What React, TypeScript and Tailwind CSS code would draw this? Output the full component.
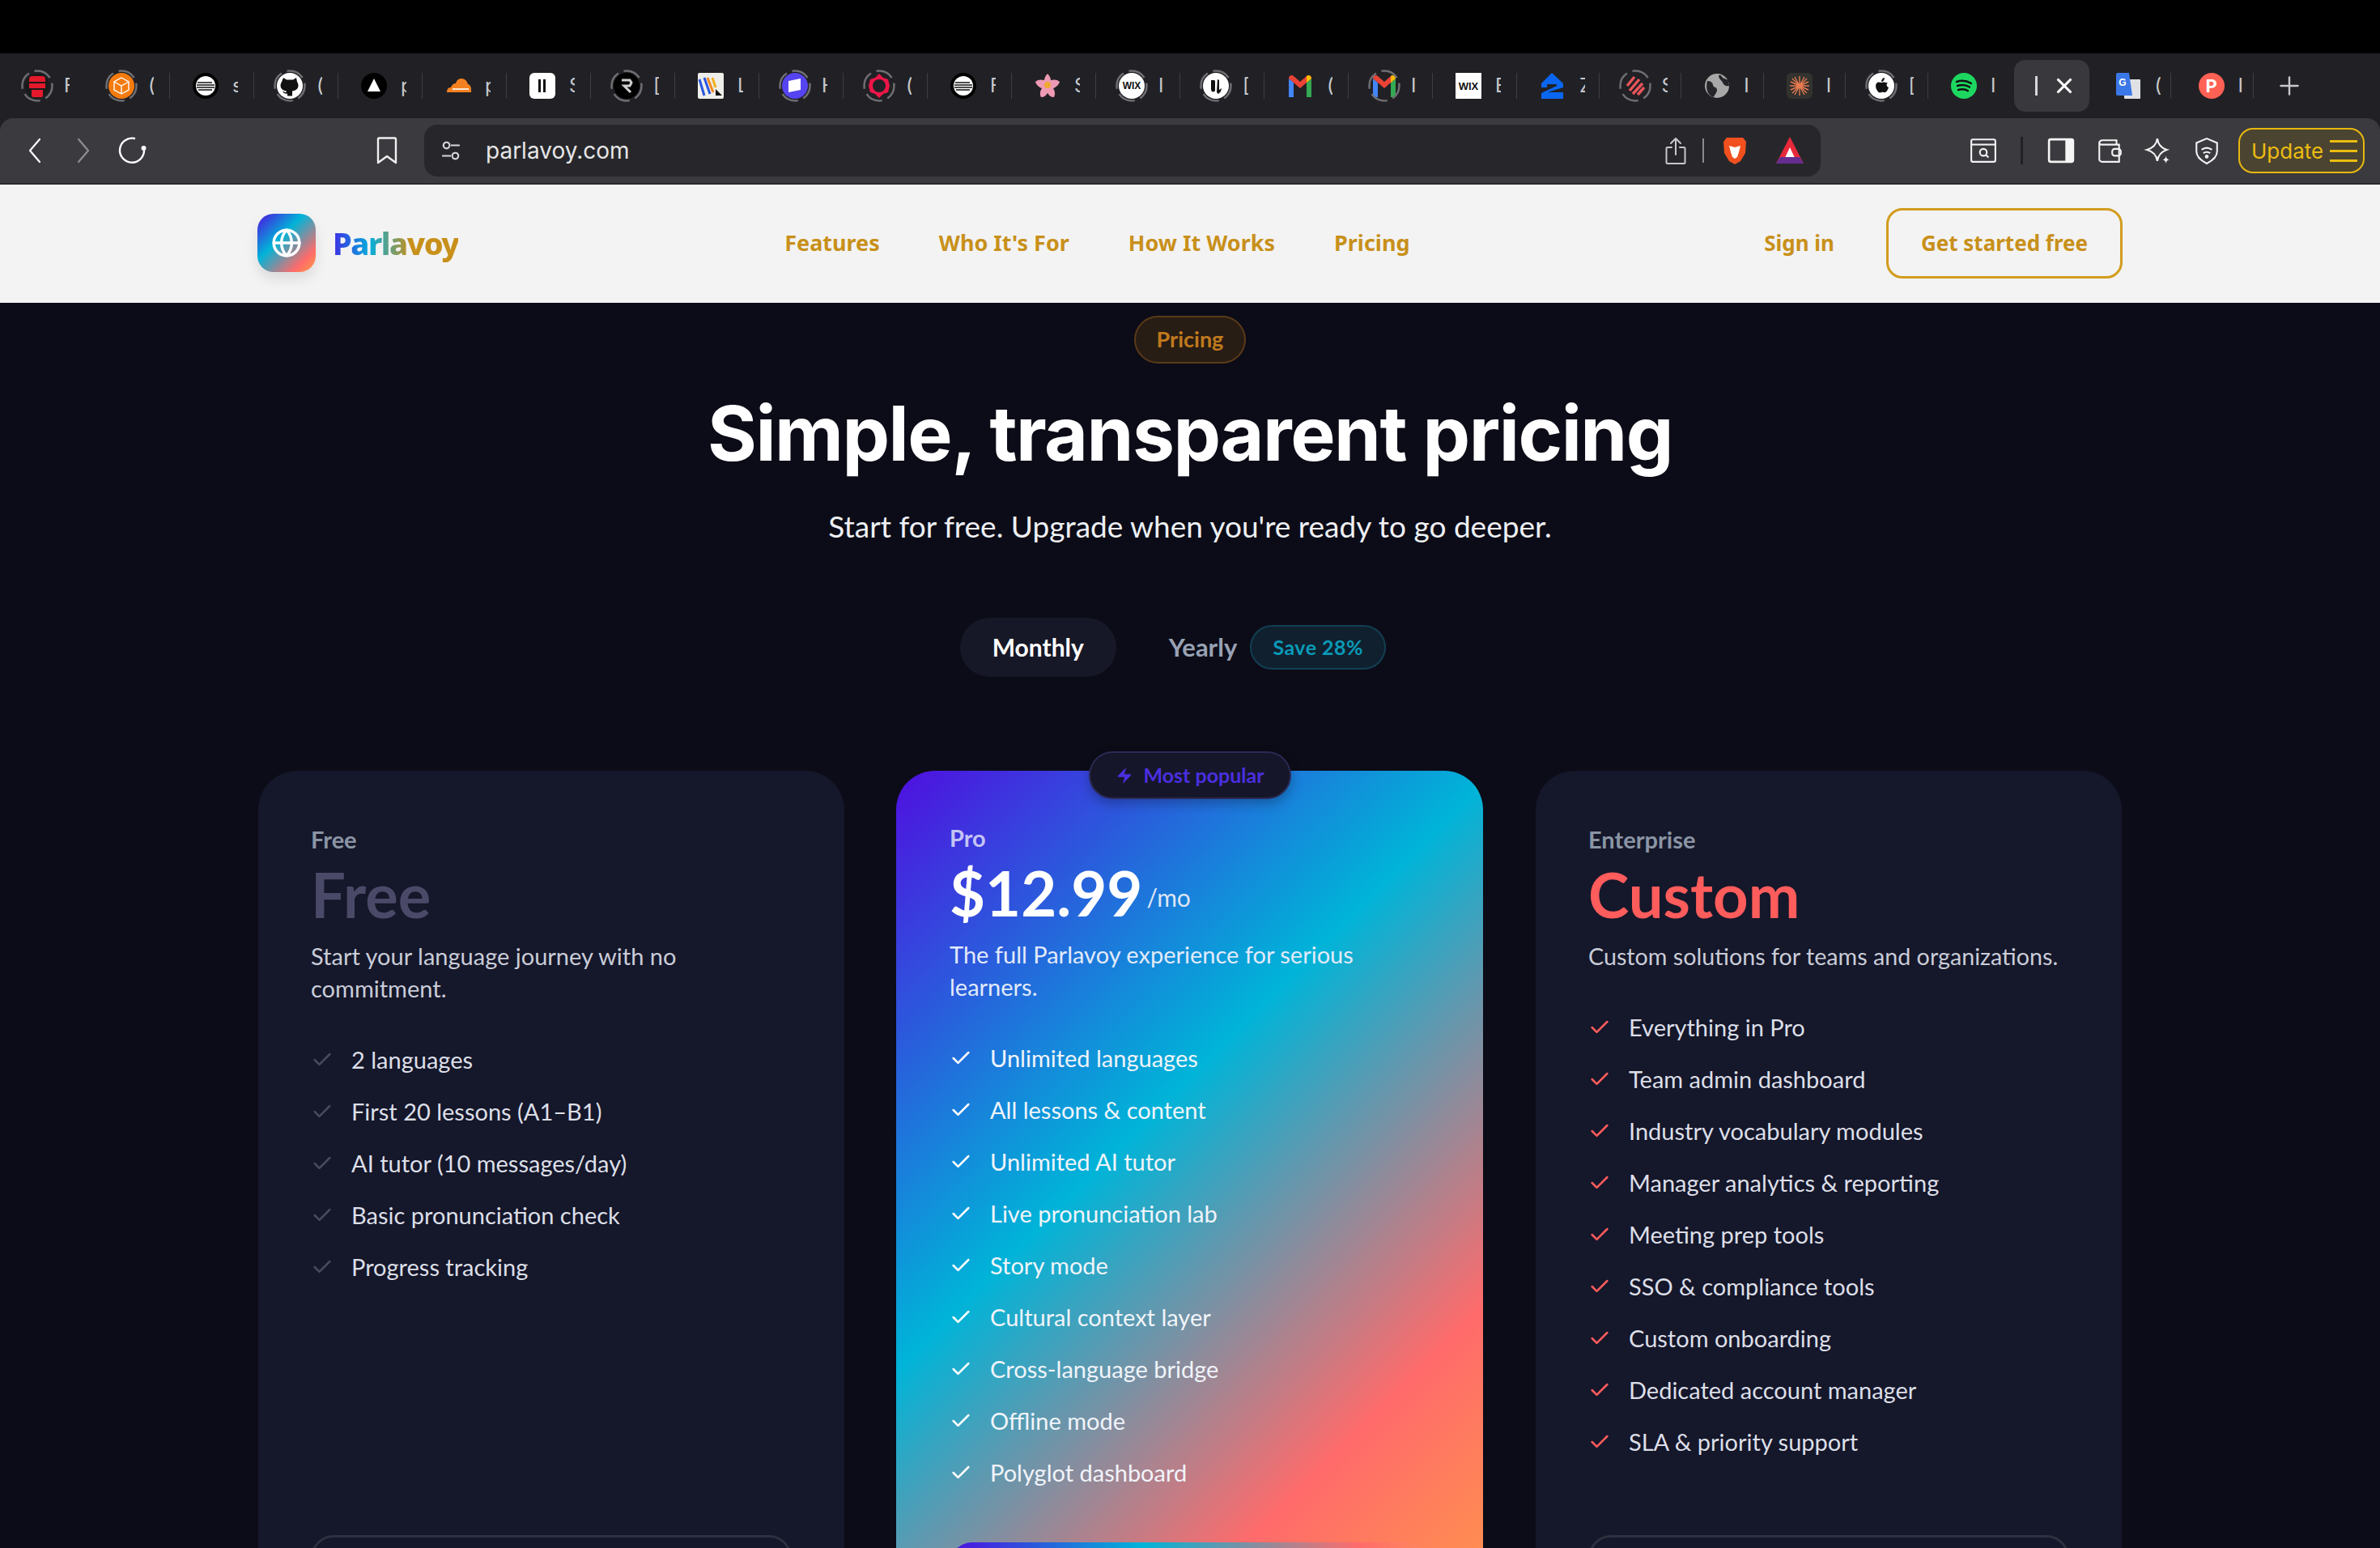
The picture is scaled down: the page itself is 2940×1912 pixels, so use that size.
import { Check, Plus, X, Zap, Globe } from 'lucide-react'

const freeItems = ['2 languages', 'First 20 lessons (A1–B1)', 'AI tutor (10 messages/day)', 'Basic pronunciation check', 'Progress tracking']
const proItems = ['Unlimited languages', 'All lessons & content', 'Unlimited AI tutor', 'Live pronunciation lab', 'Story mode', 'Cultural context layer', 'Cross-language bridge', 'Offline mode', 'Polyglot dashboard']
const entItems = ['Everything in Pro', 'Team admin dashboard', 'Industry vocabulary modules', 'Manager analytics & reporting', 'Meeting prep tools', 'SSO & compliance tools', 'Custom onboarding', 'Dedicated account manager', 'SLA & priority support']

const tabs = [
  { k: 'fort', t: 'F', ring: true },
  { k: 'cube', t: '(', ring: true },
  { k: 'lines', t: 's', ring: false },
  { k: 'gh', t: '(', ring: true },
  { k: 'tri', t: 'p', ring: false },
  { k: 'cf', t: 'p', ring: false },
  { k: 'pause', t: 'S', ring: false },
  { k: 'r', t: '[', ring: true },
  { k: 'sq', t: 'L', ring: false },
  { k: 'purple', t: 'H', ring: true },
  { k: 'redring', t: '(', ring: true },
  { k: 'lines', t: 'F', ring: false },
  { k: 'flower', t: 'S', ring: false },
  { k: 'wix', t: 'I', ring: true },
  { k: 'unreal', t: '[', ring: true },
  { k: 'gmail', t: '(', ring: false },
  { k: 'gmail', t: 'I', ring: true },
  { k: 'wixsq', t: 'E', ring: false },
  { k: 'z', t: 'Z', ring: false },
  { k: 'stripes', t: 'S', ring: true },
  { k: 'globe', t: 'I', ring: false },
  { k: 'burst', t: 'I', ring: false },
  { k: 'apple', t: '[', ring: true },
  { k: 'spotify', t: 'I', ring: false },
]

function Favicon({ k }: { k: string }) {
  const box = 'w-[32px] h-[32px] block'
  switch (k) {
    case 'fort':
      return (
        <svg viewBox="0 0 32 32" className={box}>
          <circle cx="16" cy="16" r="15" fill="#1a1a1a" />
          <path d="M6 8a4 4 0 0 1 4-4h12a4 4 0 0 1 4 4v3H6zM6 13h20v6H6zM9 21h14v7a2 2 0 0 1-2 2H11a2 2 0 0 1-2-2z" fill="#e5192c" />
        </svg>
      )
    case 'cube':
      return (
        <svg viewBox="0 0 32 32" className={box}>
          <circle cx="16" cy="16" r="16" fill="#f47b0f" />
          <path d="M16 6l9 5v10l-9 5-9-5V11zM7 11l9 5 9-5M16 16v10" fill="none" stroke="#fff" strokeWidth="1.4" />
        </svg>
      )
    case 'lines':
      return (
        <svg viewBox="0 0 32 32" className={box}>
          <circle cx="16" cy="16" r="16" fill="#000" />
          <circle cx="16" cy="16" r="12" fill="#fff" />
          <path d="M6 12h18M5 15h22M5 18h22M7 21h17" stroke="#111" strokeWidth="1.6" />
        </svg>
      )
    case 'gh':
      return (
        <svg viewBox="0 0 32 32" className={box}>
          <circle cx="16" cy="16" r="16" fill="#fff" />
          <path d="M8 6l4 2.500h8L24 6l1 5c1 1.500 1.500 3 1.500 4.500 0 4.500-3.500 6.500-7.500 7v6h-6v-3c-3 .7-5-.5-6-3 1.500.5 3 1.500 4 2l1-2c-4-.5-7.500-2.500-7.500-7 0-1.500.5-3 1.500-4.500z" fill="#111" />
        </svg>
      )
    case 'tri':
      return (
        <svg viewBox="0 0 32 32" className={box}>
          <circle cx="16" cy="16" r="16" fill="#000" />
          <path d="M16 7l8 16H8z" fill="#fff" />
        </svg>
      )
    case 'cf':
      return (
        <svg viewBox="0 0 32 32" className={box}>
          <path d="M2 24c0-4 2-6 5-6 1-3 3-5 6-5 1-4 4-6 7-6 4 0 7 3 8 7 2 0 4 3 4 6v4z" fill="#f48120" />
          <path d="M9 20h20" stroke="#fff" strokeWidth="1.6" />
        </svg>
      )
    case 'pause':
      return (
        <svg viewBox="0 0 32 32" className={box}>
          <rect width="32" height="32" rx="6" fill="#fff" />
          <rect x="11" y="8" width="3" height="16" fill="#111" />
          <rect x="17" y="8" width="3" height="16" fill="#111" />
        </svg>
      )
    case 'r':
      return (
        <svg viewBox="0 0 32 32" className={box}>
          <circle cx="16" cy="16" r="16" fill="#000" />
          <path d="M10 9h10l2 3-2 4h-7l8 8" fill="none" stroke="#cfcfcf" strokeWidth="3" />
        </svg>
      )
    case 'sq':
      return (
        <svg viewBox="0 0 32 32" className={box}>
          <rect width="32" height="32" rx="2" fill="#eeeeea" />
          <path d="M2 8l6 20M8 6l7 20" stroke="#2a55e0" strokeWidth="3" />
          <path d="M12 6l7 18" stroke="#f28a1e" strokeWidth="3" />
          <path d="M18 6l4 12" stroke="#f2b01e" strokeWidth="3" />
          <path d="M22 20l8 8h-8z" fill="#111" />
        </svg>
      )
    case 'purple':
      return (
        <svg viewBox="0 0 32 32" className={box}>
          <circle cx="16" cy="16" r="16" fill="#5544f0" />
          <path d="M8 10l15-3v14L8 24z" fill="#fff" />
        </svg>
      )
    case 'redring':
      return (
        <svg viewBox="0 0 32 32" className={box}>
          <path d="M16 1l5 5 6 2 2 8-2 8-6 2-5 5-5-5-6-2-2-8 2-8 6-2z" fill="#ee1548" />
          <circle cx="16" cy="16" r="8" fill="#212125" />
        </svg>
      )
    case 'flower':
      return (
        <svg viewBox="0 0 32 32" className={box}>
          <path d="M16 1c3 3 4 6 4 8 4-1 8-1 11 2-1 4-5 7-8 8 2 3 3 7 1 11-4 0-6-2-8-5-2 3-4 5-8 5-2-4-1-8 1-11-3-1-7-4-8-8 3-3 7-3 11-2 0-2 1-5 4-8z" fill="#ee9ab4" />
          <circle cx="16" cy="15" r="4" fill="#f0a830" />
        </svg>
      )
    case 'wix':
      return (
        <svg viewBox="0 0 32 32" className={box}>
          <circle cx="16" cy="16" r="16" fill="#fff" />
          <text x="16" y="20" textAnchor="middle" fontSize="12" fontWeight="700" fill="#111" fontFamily="'Liberation Sans', sans-serif">WIX</text>
        </svg>
      )
    case 'unreal':
      return (
        <svg viewBox="0 0 32 32" className={box}>
          <circle cx="16" cy="16" r="16" fill="#fff" />
          <path d="M10 9v11c0 3 2 4 4 3l1-1V10l-1-1zM18 8l2 1v12l3-2-1 4-3 3-2-2z" fill="#111" />
        </svg>
      )
    case 'gmail':
      return (
        <svg viewBox="0 0 32 32" className={box}>
          <path d="M2 30V7l6 5v18z" fill="#4285f4" />
          <path d="M24 30V12l6-5v23z" fill="#34a853" />
          <path d="M2 7c0-4 4-5 6-3l8 7 8-7c2-2 6-1 6 3l-6 5-8 7-8-7z" fill="#ea4335" />
          <path d="M24 4c2-2 6-1 6 3l-6 5z" fill="#fbbc04" />
        </svg>
      )
    case 'wixsq':
      return (
        <svg viewBox="0 0 32 32" className={box}>
          <rect width="32" height="32" fill="#fff" />
          <text x="16" y="21" textAnchor="middle" fontSize="13" fontWeight="700" fill="#111" fontFamily="'Liberation Sans', sans-serif">WIX</text>
        </svg>
      )
    case 'z':
      return (
        <svg viewBox="0 0 32 32" className={box}>
          <path d="M15 0l14 13v5L10 24h19v8H2v-7l19-9v-2H9v4H2v-5z" fill="#0a66f0" />
        </svg>
      )
    case 'stripes':
      return (
        <svg viewBox="0 0 32 32" className={box}>
          <path d="M6 16L15 5M9 22L21 8M13 26L25 13M19 27L27 18" stroke="#e8555a" strokeWidth="3.400" />
        </svg>
      )
    case 'globe':
      return (
        <svg viewBox="0 0 32 32" className={box}>
          <circle cx="16" cy="16" r="15" fill="#a8a8a8" />
          <path d="M4 10c4 0 7 2 7 5s5 2 5 6-4 7-4 9c-6-1-11-9-8-20zM21 3c1 3 4 4 9 6l1 7c-4 1-7-1-8-4s-5-4-5-9z" fill="#26262a" />
        </svg>
      )
    case 'burst':
      return (
        <svg viewBox="0 0 32 32" className={box}>
          <rect width="32" height="32" rx="6" fill="#32322f" />
          <path d="M16 4v24M4 16h24M7 7l18 18M25 7L7 25M10 5l12 22M22 5L10 27M5 11l22 10M27 11L5 21" stroke="#e67a50" strokeWidth="1.400" />
        </svg>
      )
    case 'apple':
      return (
        <svg viewBox="0 0 32 32" className={box}>
          <circle cx="16" cy="16" r="16" fill="#fff" />
          <path d="M21 12c-2-1-3 0-5 0s-3-1-5 0c-3 2-2 7 0 10 1 2 3 3 5 2 1-.5 2-.5 3 0 3 1 5-3 6-6-3-1-3-5-1-6zM16 11c0-3 2-5 4-5 0 3-2 5-4 5z" fill="#111" />
        </svg>
      )
    case 'spotify':
      return (
        <svg viewBox="0 0 32 32" className={box}>
          <circle cx="16" cy="16" r="16" fill="#1ed760" />
          <path d="M7 11c6-2 13-1 18 2M8 16c5-1.500 11-1 15 1.500M9 21c4-1 9-.8 12 1.200" fill="none" stroke="#111" strokeWidth="2.400" strokeLinecap="round" />
        </svg>
      )
    default:
      return null
  }
}

function Ring() {
  return (
    <svg viewBox="0 0 40 40" className="absolute -left-[4px] -top-[4px] w-[40px] h-[40px]">
      <circle cx="20" cy="20" r="18.500" fill="none" stroke="#6e6e73" strokeWidth="2.500" strokeDasharray="22 7" strokeDashoffset="4" />
    </svg>
  )
}

function Tab({ k, t, ring, wide, sep }: { k: string; t: string; ring: boolean; wide: boolean; sep: boolean }) {
  return (
    <div className={`${wide ? 'w-[104px]' : 'w-[101.6px]'} h-[32px] shrink-0 pl-[28px] flex items-center relative`}>
      <div className="relative w-[32px] h-[32px] shrink-0">
        {ring && <Ring />}
        <Favicon k={k} />
      </div>
      <span className="ml-[17px] w-[7px] overflow-hidden text-[24px] leading-[32px] text-[#c9c9cc]">{t}</span>
      {sep && <div className="absolute right-0 top-0 w-px h-[32px] bg-[#3e3e42]" />}
    </div>
  )
}

function TabStrip() {
  return (
    <div className="h-[80px] bg-[#212125] flex items-center pl-[2px] font-['Inter',sans-serif]">
      {tabs.map((tab, i) => (
        <Tab key={i} {...tab} wide={i < 18} sep={i > 0 && i < tabs.length - 1} />
      ))}
      <div className="ml-[4px] w-[93px] h-[64px] rounded-[14px] bg-[#38383d] flex items-center pl-[26px] gap-[18px] shrink-0">
        <span className="w-[3px] h-[24px] bg-[#d8d8da] block" />
        <X size={30} strokeWidth={2.500} className="text-white" />
      </div>
      <div className="w-[101px] h-[32px] pl-[32px] flex items-center shrink-0 relative">
        <svg viewBox="0 0 32 32" className="w-[32px] h-[32px] block">
          <rect x="11" y="8" width="20" height="24" rx="1" fill="#dfe1e5" />
          <path d="M1 2a2 2 0 0 1 2-2h14l4 28H3a2 2 0 0 1-2-2z" fill="#3b78e7" />
          <text x="9" y="16" textAnchor="middle" fontSize="12" fontWeight="700" fill="#fff" fontFamily="'Liberation Sans', sans-serif">G</text>
        </svg>
        <span className="ml-[17px] w-[7px] overflow-hidden text-[24px] leading-[32px] text-[#c9c9cc]">(</span>
        <div className="absolute right-0 top-0 w-px h-[32px] bg-[#3e3e42]" />
      </div>
      <div className="w-[102px] h-[32px] pl-[34px] flex items-center shrink-0 relative">
        <div className="w-[32px] h-[32px] rounded-full bg-[#ff6154] flex items-center justify-center text-white font-bold text-[22px]">P</div>
        <span className="ml-[17px] w-[7px] overflow-hidden text-[24px] leading-[32px] text-[#c9c9cc]">I</span>
        <div className="absolute right-0 top-0 w-px h-[32px] bg-[#3e3e42]" />
      </div>
      <Plus size={36} strokeWidth={1.600} className="ml-[26px] text-[#c8c8cc]" />
    </div>
  )
}

function Toolbar() {
  return (
    <div className="bg-[#212125]">
      <div className="h-[82px] bg-[#3a3a3f] rounded-t-[16px] border-b-2 border-[#2a2a2e] flex items-center pl-[34px] pr-[19px] font-['Inter',sans-serif]">
        <svg viewBox="0 0 18 32" className="w-[18px] h-[32px] shrink-0" fill="none" stroke="#fff" strokeWidth="2.200" strokeLinecap="round" strokeLinejoin="round">
          <path d="M15 2L3 16l12 14" />
        </svg>
        <svg viewBox="0 0 18 32" className="ml-[42px] w-[18px] h-[32px] shrink-0" fill="none" stroke="#8d8d92" strokeWidth="2.200" strokeLinecap="round" strokeLinejoin="round">
          <path d="M3 2l12 14L3 30" />
        </svg>
        <svg viewBox="0 0 36 36" className="ml-[33px] w-[36px] h-[36px] shrink-0" fill="none" stroke="#fff" strokeWidth="2.400" strokeLinecap="round">
          <path d="M21 3A15 15 0 1 0 33 18" />
          <circle cx="32.500" cy="15" r="3" fill="#fff" stroke="none" />
        </svg>
        <svg viewBox="0 0 26 34" className="ml-[284px] w-[26px] h-[34px] shrink-0" fill="none" stroke="#f0f0f0" strokeWidth="2.400" strokeLinejoin="round">
          <path d="M2 3a1.500 1.500 0 0 1 1.500-1.500h19A1.500 1.500 0 0 1 24 3v29l-11-8-11 8z" />
        </svg>
        <div className="ml-[33px] w-[1725px] h-[64px] bg-[#27272b] rounded-[16px] flex items-center pl-[20px] pr-[20px] shrink-0">
          <svg viewBox="0 0 24 24" className="w-[26px] h-[26px]" fill="none" stroke="#d8d8da" strokeWidth="2">
            <circle cx="7" cy="6" r="3.500" />
            <path d="M12 6h10M2 18h10" />
            <circle cx="17" cy="18" r="3.500" />
          </svg>
          <span className="ml-[30px] text-[28px] text-[#e6e6e8]">parlavoy.com</span>
          <svg viewBox="0 0 26 36" className="ml-auto w-[26px] h-[36px]" fill="none" stroke="#c8c8cc" strokeWidth="2" strokeLinecap="round" strokeLinejoin="round">
            <path d="M13 23V3M7 9l6-6 6 6M8 14H3a1.500 1.500 0 0 0-1.500 1.500v17A1.500 1.500 0 0 0 3 34h20a1.500 1.500 0 0 0 1.500-1.500v-17A1.500 1.500 0 0 0 23 14h-5" />
          </svg>
          <span className="ml-[20px] w-[2px] h-[30px] bg-[#8a8a8e]" />
          <svg viewBox="0 0 32 36" className="ml-[22px] w-[32px] h-[36px]">
            <path d="M6 2h20l4 5-1 14-6 10-7 4-7-4-6-10L2 7z" fill="#f2501e" />
            <path d="M9 12l7 2 7-2-2 8-2 6-3 2-3-2-2-6z" fill="#fff" />
          </svg>
          <svg viewBox="0 0 36 36" className="ml-[34px] w-[36px] h-[36px]">
            <path d="M18 1l17 33H1z" fill="#e8293a" />
            <path d="M18 14l8 17H10z" fill="#fff" />
            <path d="M1 34l5-8h24l5 8z" fill="#662d91" />
          </svg>
        </div>
        <svg viewBox="0 0 32 32" className="ml-[184px] w-[34px] h-[34px] shrink-0" fill="none" stroke="#f2f2f2" strokeWidth="2">
          <rect x="2" y="3" width="28" height="26" rx="2" />
          <path d="M2 9h28" />
          <circle cx="16" cy="18" r="4" />
          <path d="M19 21l3 3" />
        </svg>
        <span className="ml-[29px] w-[3px] h-[34px] bg-[#222226] shrink-0" />
        <svg viewBox="0 0 32 32" className="ml-[30px] w-[34px] h-[34px] shrink-0">
          <rect x="2" y="3" width="28" height="26" rx="2" fill="none" stroke="#f5f5f5" strokeWidth="2.500" />
          <rect x="21" y="3" width="9" height="26" fill="#f5f5f5" />
        </svg>
        <svg viewBox="0 0 32 32" className="ml-[26px] w-[34px] h-[34px] shrink-0" fill="none" stroke="#f2f2f2" strokeWidth="2">
          <path d="M4 8c0-3 2-4 4-4h16v4M4 8v18c0 2 2 3 3 3h20V9H7C5 9 4 8 4 8z" />
          <rect x="19" y="14" width="10" height="8" rx="3" />
        </svg>
        <svg viewBox="0 0 32 32" className="ml-[26px] w-[34px] h-[36px] shrink-0" fill="none" stroke="#f2f2f2" strokeWidth="2">
          <path d="M15 2c1 7 4 11 11 13-6 2-10 6-11 13-1-7-5-11-12-13 7-2 11-6 12-13z" />
          <path d="M25 22c.5 3 1.500 4 4 4.500-2.500.5-3.500 1.500-4 4.500-.5-3-1.500-4-4-4.500 2.500-.5 3.500-1.500 4-4.500z" fill="#f2f2f2" stroke="none" />
        </svg>
        <svg viewBox="0 0 32 32" className="ml-[26px] w-[34px] h-[38px] shrink-0" fill="none" stroke="#f2f2f2" strokeWidth="2">
          <path d="M16 2l12 5v10c0 7-6 11-12 14C10 28 4 24 4 17V7z" />
          <path d="M10 15c4-3 8-3 12 0M12 19c3-2 5-2 8 0" />
          <circle cx="16" cy="23" r="1.200" fill="#f2f2f2" />
        </svg>
        <div className="ml-[22px] w-[156px] h-[56px] rounded-[18px] border-2 border-[#e8b80f] bg-[#4b4430] flex items-center pl-[14px] gap-[8px] shrink-0">
          <span className="text-[#ecbc10] text-[26px]">Update</span>
          <div className="flex flex-col gap-[9px]">
            <span className="block w-[34px] h-[3px] bg-[#ecbc10]" />
            <span className="block w-[34px] h-[3px] bg-[#ecbc10]" />
            <span className="block w-[34px] h-[3px] bg-[#ecbc10]" />
          </div>
        </div>
      </div>
    </div>
  )
}

function Header() {
  return (
    <header className="h-[146px] bg-[#f3f3f3] flex items-center pb-[2px] pl-[318px] pr-[318px] font-['Noto_Sans',sans-serif] font-bold text-[#c8901a]">
      <div className="w-[72px] h-[72px] rounded-[20px] bg-[linear-gradient(135deg,#4f0fe0_0%,#00b4d8_40%,#ff6b6b_80%,#ff9f43_100%)] flex items-center justify-center shadow-[0_8px_16px_rgba(0,0,0,0.1)]">
        <Globe size={38} strokeWidth={2.200} className="text-white" />
      </div>
      <span className="ml-[21px] text-[38px] font-extrabold tracking-[-1.500px] bg-[linear-gradient(90deg,#3d2de4_0%,#06aedb_30%,#c8901a_62%)] bg-clip-text text-transparent">Parlavoy</span>
      <nav className="ml-[403px] flex gap-[73px] text-[27px]">
        <span>Features</span>
        <span>Who It's For</span>
        <span>How It Works</span>
        <span>Pricing</span>
      </nav>
      <span className="ml-auto text-[26px]">Sign in</span>
      <div className="ml-[64px] w-[292px] h-[87px] rounded-[20px] border-[3.500px] border-[#d29c1e] flex items-center justify-center text-[26px]">Get started free</div>
    </header>
  )
}

function Item({ text, check, className }: { text: string; check: string; className: string }) {
  return (
    <li className="h-[64px] flex items-center">
      <Check size={28} strokeWidth={2.200} className={`${check} shrink-0`} />
      <span className={`ml-[22px] text-[29px] ${className}`}>{text}</span>
    </li>
  )
}

function Pricing() {
  return (
    <main className="h-[1538px] overflow-hidden bg-[#0c0c18] font-['Lato',sans-serif]">
      <div className="pt-[16px] flex flex-col items-center">
        <div className="h-[59px] w-[138px] rounded-full border-2 border-[#5a3a18] bg-[#281d14] flex items-center justify-center text-[27px] font-bold text-[#c07a1c]">Pricing</div>
        <h1 className="mt-[31px] text-[93px] leading-[110px] font-bold tracking-[-1.500px] text-white font-['Inter',sans-serif]">Simple, transparent pricing</h1>
        <p className="mt-[33px] text-[37px] leading-[54px] text-[#eef0f4]">Start for free. Upgrade when you're ready to go deeper.</p>
        <div className="mt-[86px] flex items-center h-[73px] pr-[42px]">
          <div className="w-[193px] h-[73px] rounded-full bg-[#171827] flex items-center justify-center text-[30px] font-bold text-white">Monthly</div>
          <span className="ml-[65px] text-[31px] font-bold text-[#98a2b3]">Yearly</span>
          <div className="ml-[16px] w-[168px] h-[55px] rounded-full border-2 border-[#123f52] bg-[#10202f] flex items-center justify-center text-[25px] tracking-[0.5px] font-bold text-[#0a9ab8]">Save 28%</div>
        </div>
      </div>
      <div className="mt-[116px] px-[319px] grid grid-cols-3 gap-[65px] items-start">
        <section className="h-[1126px] rounded-[48px] bg-[#15172a] px-[65px] pt-[65px] pb-[92px] flex flex-col">
          <div className="text-[29px] leading-[40px] font-bold text-[#8a95a5]">Free</div>
          <div className="mt-[3px] text-[76px] leading-[90px] font-bold text-[#4a4a68]">Free</div>
          <p className="mt-[11px] text-[29px] leading-[40px] text-[#c9ccd8]">Start your language journey with no commitment.</p>
          <ul className="mt-[36px]">
            {freeItems.map(t => (
              <Item key={t} text={t} check="text-[#474a5c]" className="text-[#dcdfe8]" />
            ))}
          </ul>
          <div className="mt-auto h-[90px] rounded-[28px] border-[3px] border-[#2e3040] shrink-0" />
        </section>
        <section className="relative -ml-[1px] h-[1126px] rounded-[48px] pl-[66px] pr-[65px] pt-[63px] pb-[83px] flex flex-col bg-[linear-gradient(135deg,#4f0fe0_0%,#00b4d8_40%,#ff6b6b_75%,#ff9f43_100%)]">
          <div className="absolute left-[238px] -top-[24px] w-[250px] h-[59px] rounded-full border-2 border-[#2b2a55] bg-[#16162a] flex items-center justify-center gap-[12px] text-[25px] font-bold text-[#4a2fe0] shadow-[0_6px_14px_rgba(0,0,0,0.25)]">
            <Zap size={22} fill="#4a2fe0" strokeWidth={0} />
            Most popular
          </div>
          <div className="text-[29px] leading-[40px] font-bold text-[#c3c3f5]">Pro</div>
          <div className="mt-[3px] flex items-center">
            <span className="text-[76px] leading-[90px] font-bold text-white">$12.99</span>
            <span className="ml-[5px] mt-[10px] text-[30px] text-[#dfe6f5]">/mo</span>
          </div>
          <p className="mt-[11px] text-[29px] leading-[40px] text-[#e2eafa]">The full Parlavoy experience for serious learners.</p>
          <ul className="mt-[36px]">
            {proItems.map(t => (
              <Item key={t} text={t} check="text-white" className="text-[#f0f4fa]" />
            ))}
          </ul>
          <div className="mt-auto h-[90px] rounded-[28px] bg-[linear-gradient(90deg,#4f0fe0_0%,#00b4d8_40%,#ff6b6b_85%,#ff8a5a_100%)] shrink-0" />
        </section>
        <section className="h-[1126px] rounded-[48px] bg-[#15172a] px-[65px] pt-[65px] pb-[92px] flex flex-col">
          <div className="text-[29px] leading-[40px] font-bold text-[#8a95a5]">Enterprise</div>
          <div className="mt-[3px] text-[76px] leading-[90px] font-bold text-[#ff5c5c]">Custom</div>
          <p className="mt-[11px] text-[28.700px] leading-[40px] text-[#c9ccd8]">Custom solutions for teams and organizations.</p>
          <ul className="mt-[36px]">
            {entItems.map(t => (
              <Item key={t} text={t} check="text-[#ff5c5c]" className="text-[#dcdfe8]" />
            ))}
          </ul>
          <div className="mt-auto h-[90px] rounded-[28px] border-[3px] border-[#2e3040] shrink-0" />
        </section>
      </div>
    </main>
  )
}

export default function App() {
  return (
    <div className="w-[2940px] h-[1912px] overflow-hidden bg-black">
      <div className="h-[66px] bg-black" />
      <TabStrip />
      <Toolbar />
      <Header />
      <Pricing />
    </div>
  )
}
